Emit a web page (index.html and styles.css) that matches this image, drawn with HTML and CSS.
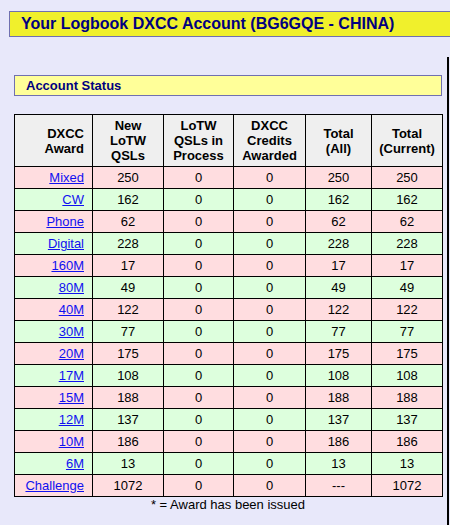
FILE: index.html
```html
<!DOCTYPE html>
<html>
<head>
<meta charset="utf-8">
<link rel="stylesheet" href="styles.css">
</head>
<body>
<div class="title">Your Logbook DXCC Account (BG6GQE - CHINA)</div>
<div class="main">
  <div class="status">Account Status</div>
  <table class="awards">
    <colgroup>
      <col class="c1"><col class="c2"><col class="c3"><col class="c4"><col class="c5"><col class="c6">
    </colgroup>
    <thead>
      <tr>
        <th class="award">DXCC<br>Award</th>
        <th>New<br>LoTW<br>QSLs</th>
        <th>LoTW<br>QSLs in<br>Process</th>
        <th>DXCC<br>Credits<br>Awarded</th>
        <th>Total<br>(All)</th>
        <th>Total<br>(Current)</th>
      </tr>
    </thead>
    <tbody>
      <tr class="pink"><td class="award"><a href="#">Mixed</a></td><td>250</td><td>0</td><td>0</td><td>250</td><td>250</td></tr>
      <tr class="green"><td class="award"><a href="#">CW</a></td><td>162</td><td>0</td><td>0</td><td>162</td><td>162</td></tr>
      <tr class="pink"><td class="award"><a href="#">Phone</a></td><td>62</td><td>0</td><td>0</td><td>62</td><td>62</td></tr>
      <tr class="green"><td class="award"><a href="#">Digital</a></td><td>228</td><td>0</td><td>0</td><td>228</td><td>228</td></tr>
      <tr class="pink"><td class="award"><a href="#">160M</a></td><td>17</td><td>0</td><td>0</td><td>17</td><td>17</td></tr>
      <tr class="green"><td class="award"><a href="#">80M</a></td><td>49</td><td>0</td><td>0</td><td>49</td><td>49</td></tr>
      <tr class="pink"><td class="award"><a href="#">40M</a></td><td>122</td><td>0</td><td>0</td><td>122</td><td>122</td></tr>
      <tr class="green"><td class="award"><a href="#">30M</a></td><td>77</td><td>0</td><td>0</td><td>77</td><td>77</td></tr>
      <tr class="pink"><td class="award"><a href="#">20M</a></td><td>175</td><td>0</td><td>0</td><td>175</td><td>175</td></tr>
      <tr class="green"><td class="award"><a href="#">17M</a></td><td>108</td><td>0</td><td>0</td><td>108</td><td>108</td></tr>
      <tr class="pink"><td class="award"><a href="#">15M</a></td><td>188</td><td>0</td><td>0</td><td>188</td><td>188</td></tr>
      <tr class="green"><td class="award"><a href="#">12M</a></td><td>137</td><td>0</td><td>0</td><td>137</td><td>137</td></tr>
      <tr class="pink"><td class="award"><a href="#">10M</a></td><td>186</td><td>0</td><td>0</td><td>186</td><td>186</td></tr>
      <tr class="green"><td class="award"><a href="#">6M</a></td><td>13</td><td>0</td><td>0</td><td>13</td><td>13</td></tr>
      <tr class="pink"><td class="award"><a href="#">Challenge</a></td><td>1072</td><td>0</td><td>0</td><td>---</td><td>1072</td></tr>
    </tbody>
  </table>
  <div class="note">* = Award has been issued</div>
</div>
</body>
</html>
```
FILE: styles.css
```css
html, body {
  margin: 0;
  padding: 0;
  overflow: hidden;
}
body {
  background: #e8e8fa;
  font-family: "Liberation Sans", Arial, sans-serif;
  color: #000;
  width: 450px;
  height: 525px;
}
.title {
  margin: 11px 0 0 9px;
  height: 24px;
  line-height: 24px;
  border: 1px solid #7070b0;
  border-right: none;
  background: #f0f02c;
  color: #000080;
  font-size: 16px;
  font-weight: bold;
  padding-left: 11px;
  white-space: nowrap;
}
.main {
  margin-top: 20px;
  width: 447px;
  height: 450px;
  border-right: 2px solid #000;
  padding-top: 18px;
}
.status {
  margin: 0 5px 0 14px;
  height: 19px;
  line-height: 19px;
  border: 1px solid #7070b0;
  background: #ffff99;
  color: #000080;
  font-size: 13px;
  font-weight: bold;
  padding-left: 11px;
}
.awards {
  margin: 18px 0 0 14px;
  width: 428px;
  border-collapse: collapse;
  table-layout: fixed;
  font-size: 13px;
}
.c1 { width: 78px; }
.c2 { width: 71px; }
.c3 { width: 70px; }
.c4 { width: 72px; }
.c5 { width: 66px; }
.c6 { width: 71px; }
.awards th, .awards td {
  border: 1px solid #000;
  text-align: center;
  padding: 0 2px;
}
.awards th {
  background: #efefef;
  font-weight: bold;
  height: 51px;
  line-height: 15px;
}
.awards td {
  height: 21px;
  line-height: 15px;
}
.awards .award {
  text-align: right;
  padding-right: 8px;
}
.awards a {
  color: #1010f0;
}
.pink td { background: #ffdde0; }
.green td { background: #ddffdd; }
.note {
  width: 428px;
  margin-left: 14px;
  text-align: center;
  font-size: 13px;
  line-height: 16px;
}
```
